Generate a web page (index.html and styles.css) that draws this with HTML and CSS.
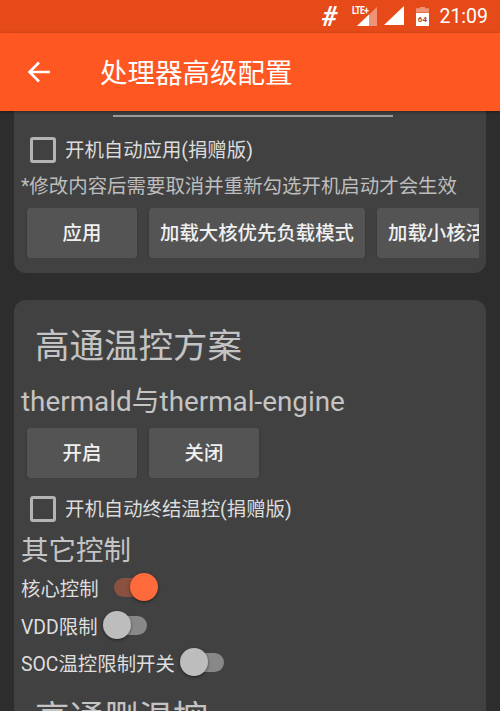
FILE: index.html
```html
<!DOCTYPE html>
<html lang="zh-CN">
<head>
<meta charset="utf-8">
<title>处理器高级配置</title>
<link rel="stylesheet" href="styles.css">
</head>
<body>
<div class="page">
  <div class="status">
    <span class="hash">#</span>
    <span class="lte">
      <svg width="25" height="26" viewBox="0 0 25 26"><path d="M25 7V26H5Z" fill="#fff" opacity=".4"/><path d="M17 14.500V26H5Z" fill="#fff"/></svg>
      <span class="lte-text">LTE+</span>
    </span>
    <svg class="signal" width="21" height="20" viewBox="0 0 21 20"><path d="M21 0V19H1Z" fill="#fff"/></svg>
    <span class="battery"><span class="battery-cap"></span><span class="battery-body">64</span></span>
    <span class="clock">21:09</span>
  </div>
  <header class="appbar">
    <svg class="back" width="26" height="26" viewBox="0 0 26 26"><path d="M24 13H4M13 3.500L3.500 13L13 22.500" fill="none" stroke="#fff" stroke-width="2.600"/></svg>
    <h1 class="title">处理器高级配置</h1>
  </header>
  <main class="content">
    <section class="card card-top">
      <div class="rule"></div>
      <label class="check"><span class="box"></span><span class="check-text">开机自动应用(捐赠版)</span></label>
      <p class="note">*修改内容后需要取消并重新勾选开机启动才会生效</p>
      <div class="buttons">
        <button class="btn btn-s">应用</button>
        <button class="btn btn-l">加载大核优先负载模式</button>
        <button class="btn btn-cut">加载小核活跃模式</button>
      </div>
    </section>
    <section class="card card-main">
      <h2 class="heading">高通温控方案</h2>
      <h3 class="sub sub-first">thermald与thermal-engine</h3>
      <div class="buttons">
        <button class="btn btn-s">开启</button>
        <button class="btn btn-s">关闭</button>
      </div>
      <label class="check check-2"><span class="box"></span><span class="check-text">开机自动终结温控(捐赠版)</span></label>
      <h3 class="sub sub-other">其它控制</h3>
      <div class="row"><span>核心控制</span><span class="switch on"><i></i></span></div>
      <div class="row"><span>VDD限制</span><span class="switch"><i></i></span></div>
      <div class="row"><span>SOC温控限制开关</span><span class="switch"><i></i></span></div>
      <h2 class="heading heading-2">高通删温控</h2>
    </section>
  </main>
</div>
</body>
</html>
```
FILE: styles.css
```css
* { box-sizing: border-box; }
html, body { margin: 0; padding: 0; }
body { font-family: "Roboto", "Noto Sans CJK SC", sans-serif; background: #2d2d2d; }
.page { width: 500px; height: 711px; overflow: hidden; display: flex; flex-direction: column; background: #2d2d2d; }
.status { height: 33px; flex: none; background: #e64a19; color: #fff; display: flex; align-items: center; justify-content: flex-end; padding-right: 12px; }
.hash { font: italic 700 27px "Roboto", sans-serif; width: 20px; margin-right: 13px; text-align: center; }
.lte { position: relative; width: 25px; height: 26px; margin-right: 6px; margin-top: -7px; }
.lte svg { display: block; }
.lte-text { position: absolute; left: 0; top: 6px; width: 26px; font: 700 10px/10px "Roboto", sans-serif; letter-spacing: -.6px; transform: scaleX(.85); transform-origin: left; }
.signal { margin-right: 11px; margin-top: -1px; }
.battery { width: 14px; height: 20px; margin-right: 10px; display: flex; flex-direction: column; align-items: center; }
.battery-cap { width: 13px; height: 6px; background: rgba(255,255,255,.4); flex: none; clip-path: polygon(30% 0, 70% 0, 70% 30%, 100% 30%, 100% 100%, 0 100%, 0 30%, 30% 30%); }
.battery-body { width: 13px; height: 13px; background: #fff; color: #b5492a; font: 700 8px/13px "Roboto", sans-serif; text-align: center; flex: none; }
.clock { font-size: 19.500px; font-weight: 400; }
.appbar { height: 78px; flex: none; background: #ff5722; display: flex; align-items: center; padding: 0 25px 0 26px; position: relative; z-index: 1; box-shadow: 0 1px 3px rgba(0,0,0,.4); }
.back { margin-right: 48px; }
.title { margin: 0; padding-bottom: 3px; color: #fff; font-size: 27.500px; font-weight: 400; white-space: nowrap; }
.content { flex: 1; min-height: 0; overflow: hidden; padding: 0 14px; display: flex; flex-direction: column; gap: 27px; }
.card { background: #414141; flex: none; }
.card-top { height: 162px; border-radius: 0 0 12px 12px; padding: 0 7px; display: flex; flex-direction: column; }
.card-main { border-radius: 12px 12px 0 0; padding: 0 7px; height: 460px; }
.rule { height: 2px; width: 280px; background: #9a9a9a; margin: 4px 0 0 92px; flex: none; }
.check { display: flex; align-items: center; color: #dcdcdc; font-size: 19.400px; height: 30px; padding-left: 9px; margin-top: 18px; line-height: 28px; }
.check-text { padding-top: 2px; }
.box { width: 26px; height: 26px; border: 3px solid #b4b4b4; border-radius: 3px; margin-right: 9px; flex: none; }
.note { margin: 8px 0 0; color: #bdbdbd; font-size: 19.450px; line-height: 28px; white-space: nowrap; }
.buttons { display: flex; gap: 12px; padding-left: 6px; overflow: hidden; flex: none; }
.card-top .buttons { margin-top: 7px; width: 458px; }
.btn { height: 50px; flex: none; border: 0; border-radius: 3px; background: #545454; color: #f0f0f0; font: 500 19.400px "Roboto", "Noto Sans CJK SC", sans-serif; padding: 0 0 3px; white-space: nowrap; box-shadow: 0 1px 2px rgba(0,0,0,.3); }
.btn-s { width: 110px; }
.btn-l { width: 216px; }
.btn-cut { width: 160px; text-align: left; padding-left: 11px; }
.heading { margin: 0; color: #c4c4c4; font-size: 34.500px; font-weight: 400; line-height: 46px; padding: 23px 0 0 14px; white-space: nowrap; }
.sub { margin: 0; color: #c4c4c4; font-size: 27.850px; font-weight: 400; line-height: 36px; white-space: nowrap; }
.sub-first { margin-top: 15px; margin-bottom: 8px; }
.check-2 { margin-top: 16px; }
.sub-other { font-size: 27.500px; margin-top: 9px; }
.row { display: flex; align-items: center; color: #dedede; font-size: 19.400px; height: 37.500px; white-space: nowrap; }
.switch { position: relative; width: 38px; height: 19px; margin-left: 11px; border-radius: 10px; background: #888; }
.switch i { position: absolute; left: -6px; top: -5px; width: 28px; height: 28px; border-radius: 50%; background: #bdbdbd; box-shadow: 0 1px 3px rgba(0,0,0,.5); }
.switch.on { background: #8a5040; margin-left: 15px; }
.switch.on i { left: 16px; background: #ff6a3c; }
.heading-2 { padding-top: 13px; }
```
